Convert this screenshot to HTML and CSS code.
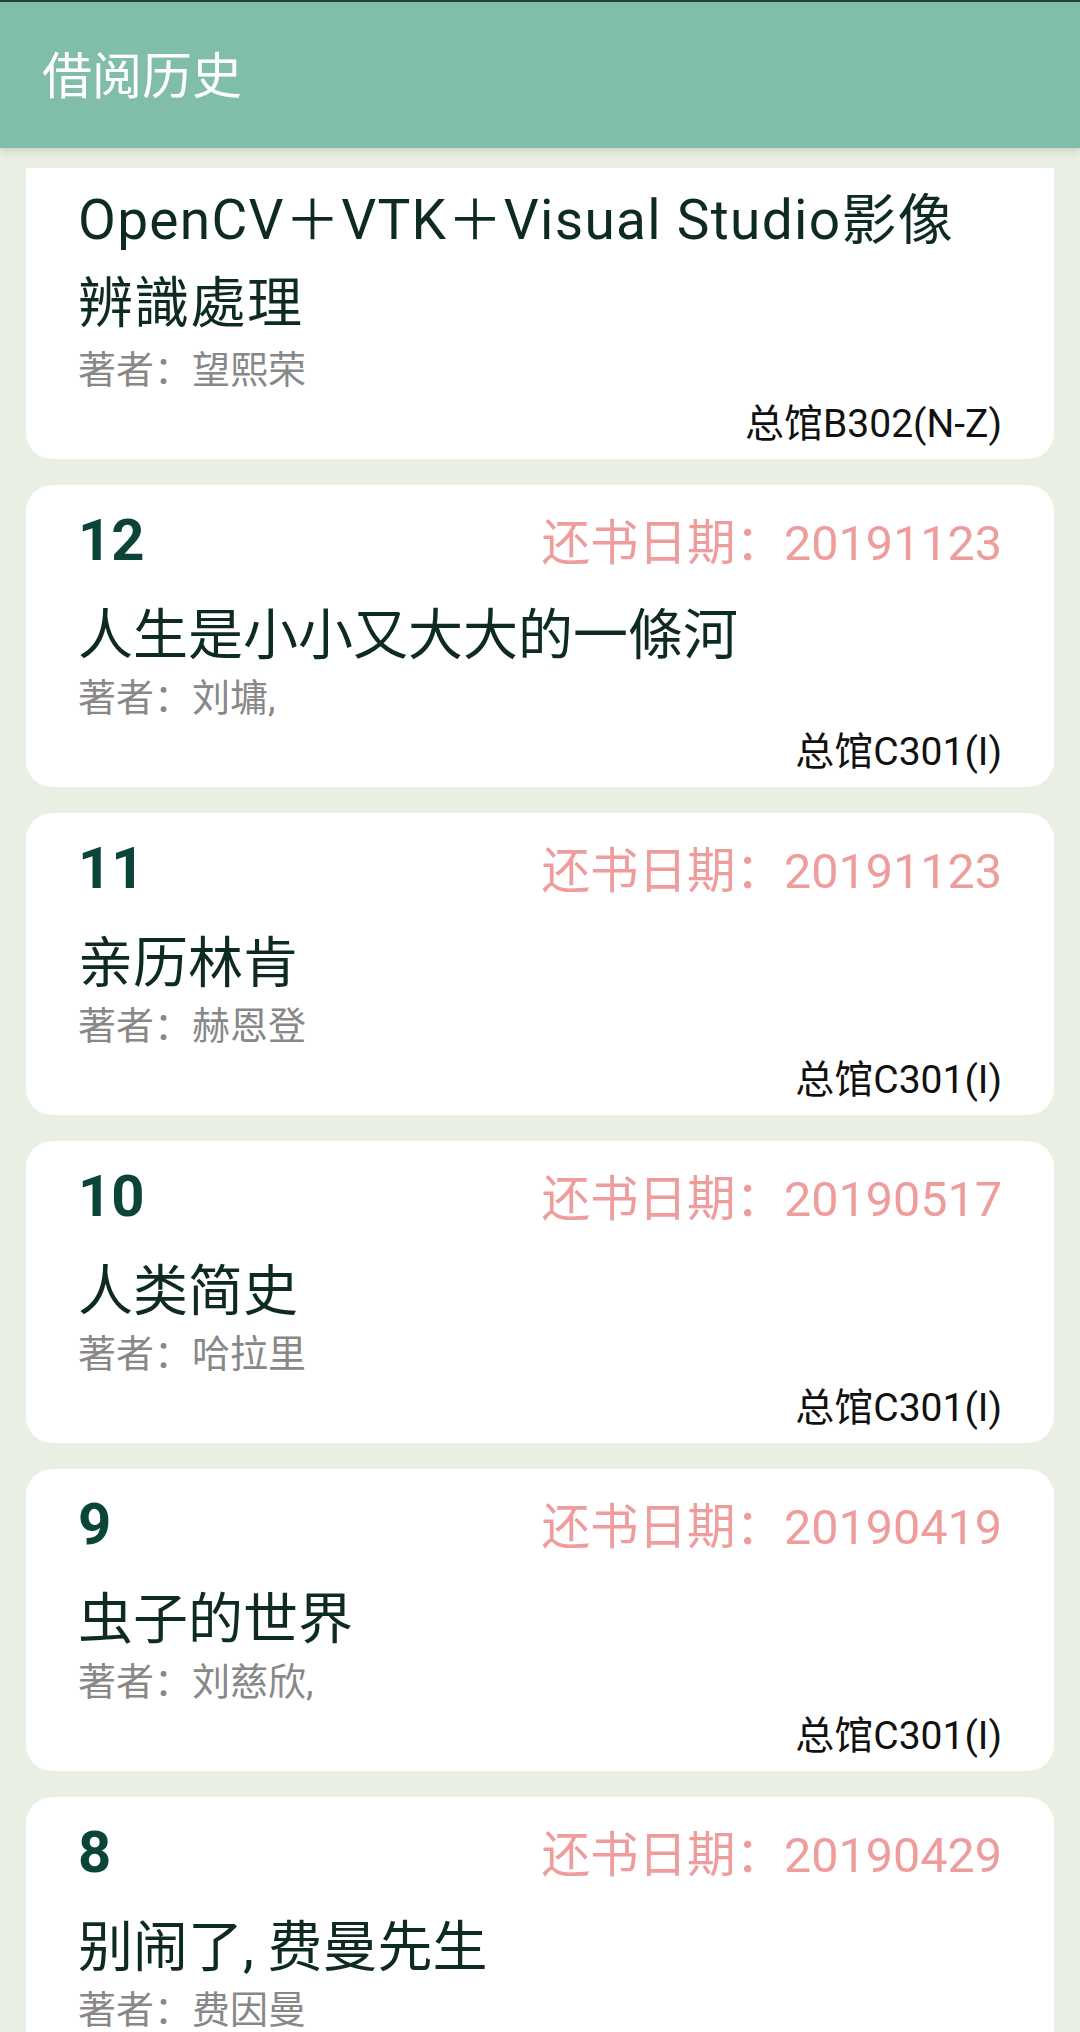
FILE: index.html
```html
<!DOCTYPE html>
<html lang="zh-CN">
<head>
<meta charset="utf-8">
<title>借阅历史</title>
<link rel="stylesheet" href="styles.css">
</head>
<body>
<div class="app">
  <header class="appbar">
    <h1 class="appbar-title">借阅历史</h1>
  </header>
  <main class="list">
    <article class="card card-clipped">
      <div class="title">OpenCV＋VTK＋Visual Studio影像辨識處理</div>
      <div class="author">著者：望熙荣</div>
      <div class="location">总馆B302(N-Z)</div>
    </article>
    <article class="card">
      <div class="row">
        <span class="num">12</span>
        <span class="date">还书日期：20191123</span>
      </div>
      <div class="title">人生是小小又大大的一條河</div>
      <div class="author">著者：刘墉,</div>
      <div class="location">总馆C301(I)</div>
    </article>
    <article class="card">
      <div class="row">
        <span class="num">11</span>
        <span class="date">还书日期：20191123</span>
      </div>
      <div class="title">亲历林肯</div>
      <div class="author">著者：赫恩登</div>
      <div class="location">总馆C301(I)</div>
    </article>
    <article class="card">
      <div class="row">
        <span class="num">10</span>
        <span class="date">还书日期：20190517</span>
      </div>
      <div class="title">人类简史</div>
      <div class="author">著者：哈拉里</div>
      <div class="location">总馆C301(I)</div>
    </article>
    <article class="card">
      <div class="row">
        <span class="num">9</span>
        <span class="date">还书日期：20190419</span>
      </div>
      <div class="title">虫子的世界</div>
      <div class="author">著者：刘慈欣,</div>
      <div class="location">总馆C301(I)</div>
    </article>
    <article class="card">
      <div class="row">
        <span class="num">8</span>
        <span class="date">还书日期：20190429</span>
      </div>
      <div class="title">别闹了, 费曼先生</div>
      <div class="author">著者：费因曼</div>
      <div class="location">总馆C301(I)</div>
    </article>
  </main>
</div>
</body>
</html>
```
FILE: styles.css
```css
* { box-sizing: border-box; }
html, body {
  margin: 0;
  padding: 0;
  background: #e9efe2;
}
body {
  font-family: Roboto, "Noto Sans CJK SC", sans-serif;
  width: 1080px;
  height: 2032px;
  overflow: hidden;
}
.app {
  display: flex;
  flex-direction: column;
  height: 2032px;
}
.appbar {
  height: 148px;
  flex: 0 0 148px;
  background: #80bdab;
  border-top: 2px solid #27403a;
  display: flex;
  align-items: center;
  padding-left: 42px;
  padding-top: 4px;
  box-shadow: 0 3px 8px rgba(60, 80, 60, 0.18);
  position: relative;
  z-index: 1;
}
.appbar-title {
  margin: 0;
  font-weight: 400;
  font-size: 50px;
  color: #ffffff;
  line-height: 60px;
}
.list {
  flex: 1;
  overflow: hidden;
  margin-top: 20px;
  padding: 0 26px;
  display: flex;
  flex-direction: column;
  gap: 26px;
}
.card {
  flex: 0 0 auto;
  background: #ffffff;
  border-radius: 26px;
  padding: 22px 52px 10px 52px;
}
.card-clipped {
  border-top-left-radius: 0;
  border-top-right-radius: 0;
  padding-top: 11px;
}
.row {
  display: flex;
  justify-content: space-between;
  align-items: baseline;
  height: 66px;
  line-height: 66px;
}
.num {
  font-size: 58px;
  font-weight: 700;
  color: #0b4438;
}
.date {
  font-size: 48.5px;
  color: #ee9c9c;
}
.title {
  margin-top: 21px;
  font-size: 55px;
  line-height: 83px;
  color: #0e2b23;
}
.title + .author {
  margin-top: -4px;
}
.card-clipped .title {
  margin-top: 0;
  letter-spacing: 1.3px;
}
.card-clipped .title + .author {
  margin-top: 0;
}
.author {
  font-size: 38px;
  line-height: 50px;
  color: #888888;
}
.location {
  margin-top: 4px;
  font-size: 39px;
  line-height: 50px;
  color: #111111;
  text-align: right;
}
```
